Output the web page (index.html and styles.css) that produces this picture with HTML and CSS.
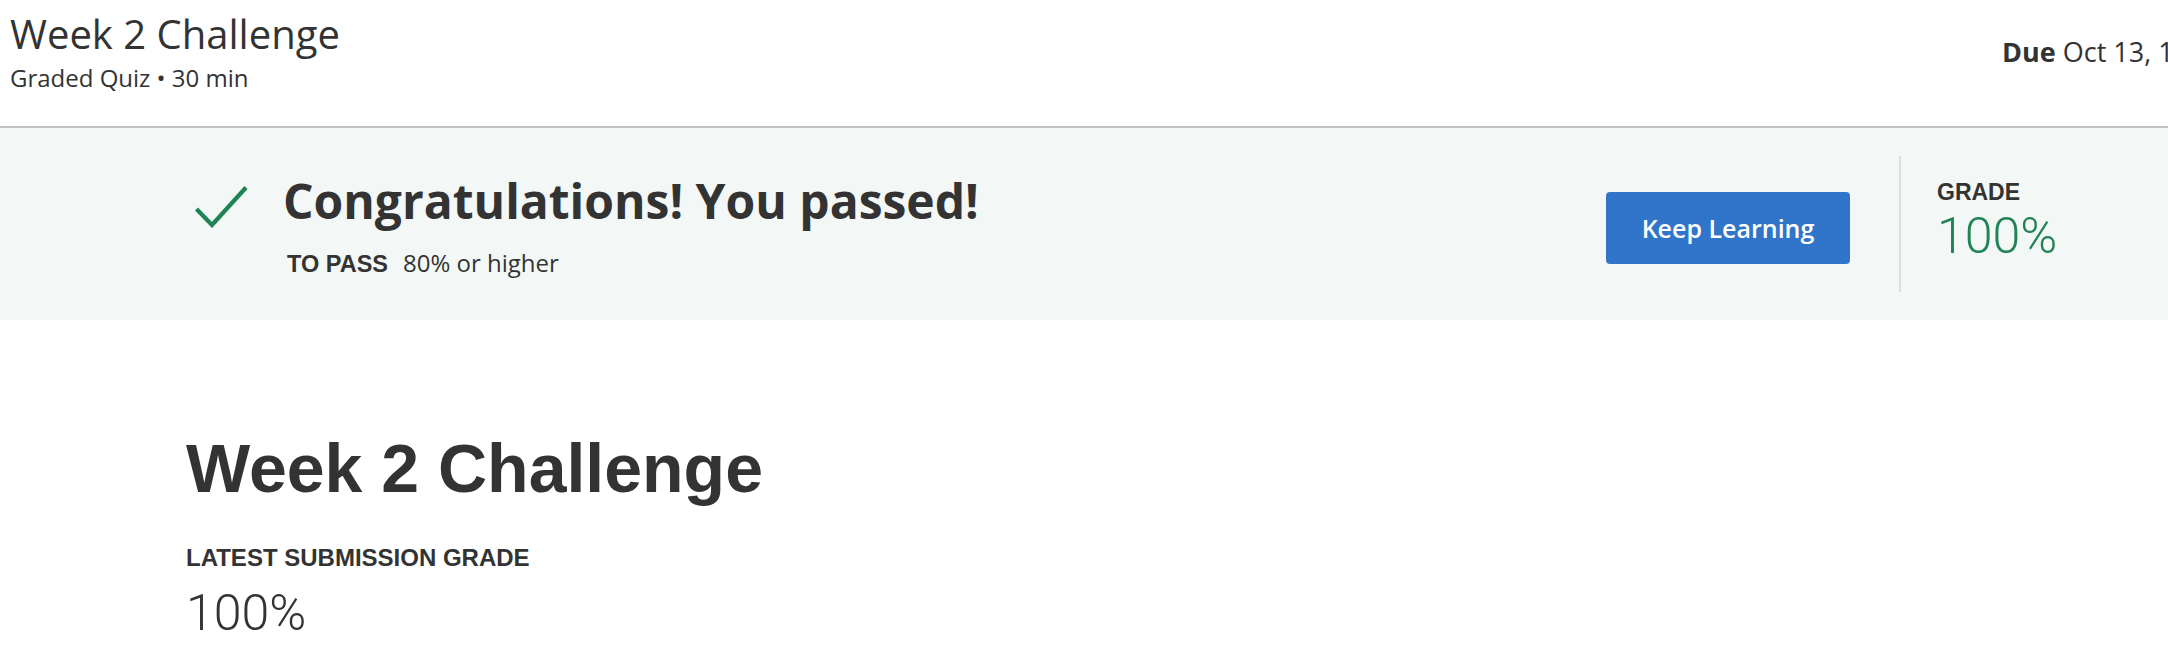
FILE: index.html
```html
<!DOCTYPE html>
<html lang="en">
<head>
<meta charset="utf-8">
<title>Week 2 Challenge</title>
<link rel="stylesheet" href="styles.css">
</head>
<body>
<div class="page">
  <header class="top-header">
    <div class="title-block">
      <h1 class="item-title">Week 2 Challenge</h1>
      <div class="item-meta">Graded Quiz • 30 min</div>
    </div>
    <div class="due"><strong>Due</strong> Oct 13, 11:59 PM PDT</div>
  </header>

  <section class="result-banner">
    <div class="result-main">
      <div class="result-title-row">
        <svg class="check" width="53" height="42" viewBox="0 0 53 42" aria-hidden="true">
          <polyline points="1.5,23 17,39 51,1.5" fill="none" stroke="#1f8354" stroke-width="4.2"/>
        </svg>
        <h2 class="result-title">Congratulations! You passed!</h2>
      </div>
      <div class="pass-row"><span class="pass-label">TO PASS</span><span class="pass-value">80% or higher</span></div>
    </div>
    <button class="btn-primary" type="button">Keep Learning</button>
    <div class="divider"></div>
    <div class="grade-block">
      <div class="label">GRADE</div>
      <div class="grade-value green">100%</div>
    </div>
  </section>

  <main class="content">
    <h1 class="quiz-heading">Week 2 Challenge</h1>
    <div class="label latest">LATEST SUBMISSION GRADE</div>
    <div class="grade-value gray">100%</div>
  </main>
</div>
</body>
</html>
```

FILE: styles.css
```css
html, body {
  margin: 0;
  padding: 0;
  background: #ffffff;
  overflow: hidden;
}

.page {
  width: 2168px;
  color: #333333;
  font-family: "Open Sans", "Liberation Sans", Arial, sans-serif;
}

/* ---------- top header ---------- */
.top-header {
  display: flex;
  justify-content: space-between;
  align-items: flex-start;
  height: 128px;
  box-sizing: border-box;
  padding-left: 10px;
  border-bottom: 2px solid #bfc3c2;
}

.item-title {
  margin: 11px 0 0;
  font-size: 40px;
  font-weight: 400;
  line-height: 46px;
  color: #333333;
}

.item-meta {
  margin-top: 6px;
  font-size: 24px;
  line-height: 30px;
  color: #333333;
}

.due {
  width: 166px;
  padding-top: 35px;
  font-size: 27px;
  line-height: 34px;
  white-space: nowrap;
  color: #333333;
}

.due strong {
  font-weight: 700;
}

/* ---------- result banner ---------- */
.result-banner {
  display: flex;
  align-items: center;
  height: 192px;
  box-sizing: border-box;
  padding-left: 195px;
  padding-right: 101px;
  background: #f3f8f6;
}

.result-main {
  margin-top: 4px;
}

.result-title-row {
  display: flex;
  align-items: flex-start;
  gap: 35px;
}

.check {
  display: block;
  margin-top: 13px;
  flex: none;
}

.result-title {
  margin: 0;
  font-size: 48px;
  font-weight: 700;
  line-height: 56px;
  color: #333333;
}

.pass-row {
  display: flex;
  align-items: baseline;
  gap: 15px;
  margin-top: 18px;
  margin-left: 92px;
  line-height: 32px;
}

.pass-label {
  font-family: "Liberation Sans", Arial, sans-serif;
  font-weight: 700;
  font-size: 23.5px;
}

.pass-value {
  font-size: 24px;
}

.btn-primary {
  margin-left: auto;
  margin-top: 8px;
  width: 244px;
  height: 72px;
  border: none;
  border-radius: 4px;
  background: #3075c9;
  color: #ffffff;
  font-family: "Open Sans", "Liberation Sans", Arial, sans-serif;
  font-size: 25px;
  font-weight: 600;
  cursor: pointer;
}

.divider {
  width: 2px;
  height: 136px;
  margin-left: 49px;
  margin-right: 36px;
  background: #dcdedd;
}

.grade-block {
  width: 130px;
  margin-bottom: 7px;
}

.label {
  font-family: "Liberation Sans", Arial, sans-serif;
  font-weight: 700;
  font-size: 23px;
  line-height: 28px;
  color: #333333;
}

.grade-value {
  margin-top: 2px;
  font-family: Roboto, "Liberation Sans", sans-serif;
  font-weight: 300;
  font-size: 50px;
  line-height: 56px;
}

.grade-value.green {
  color: #1f8354;
}

.grade-value.gray {
  color: #333333;
  margin-top: 13px;
}

/* ---------- main content ---------- */
.content {
  padding-left: 186px;
  padding-top: 107px;
}

.quiz-heading {
  margin: 0;
  font-family: "Liberation Sans", Arial, sans-serif;
  font-weight: 700;
  font-size: 68px;
  line-height: 82px;
  color: #333333;
}

.latest {
  margin-top: 35px;
  font-size: 24px;
}
```
